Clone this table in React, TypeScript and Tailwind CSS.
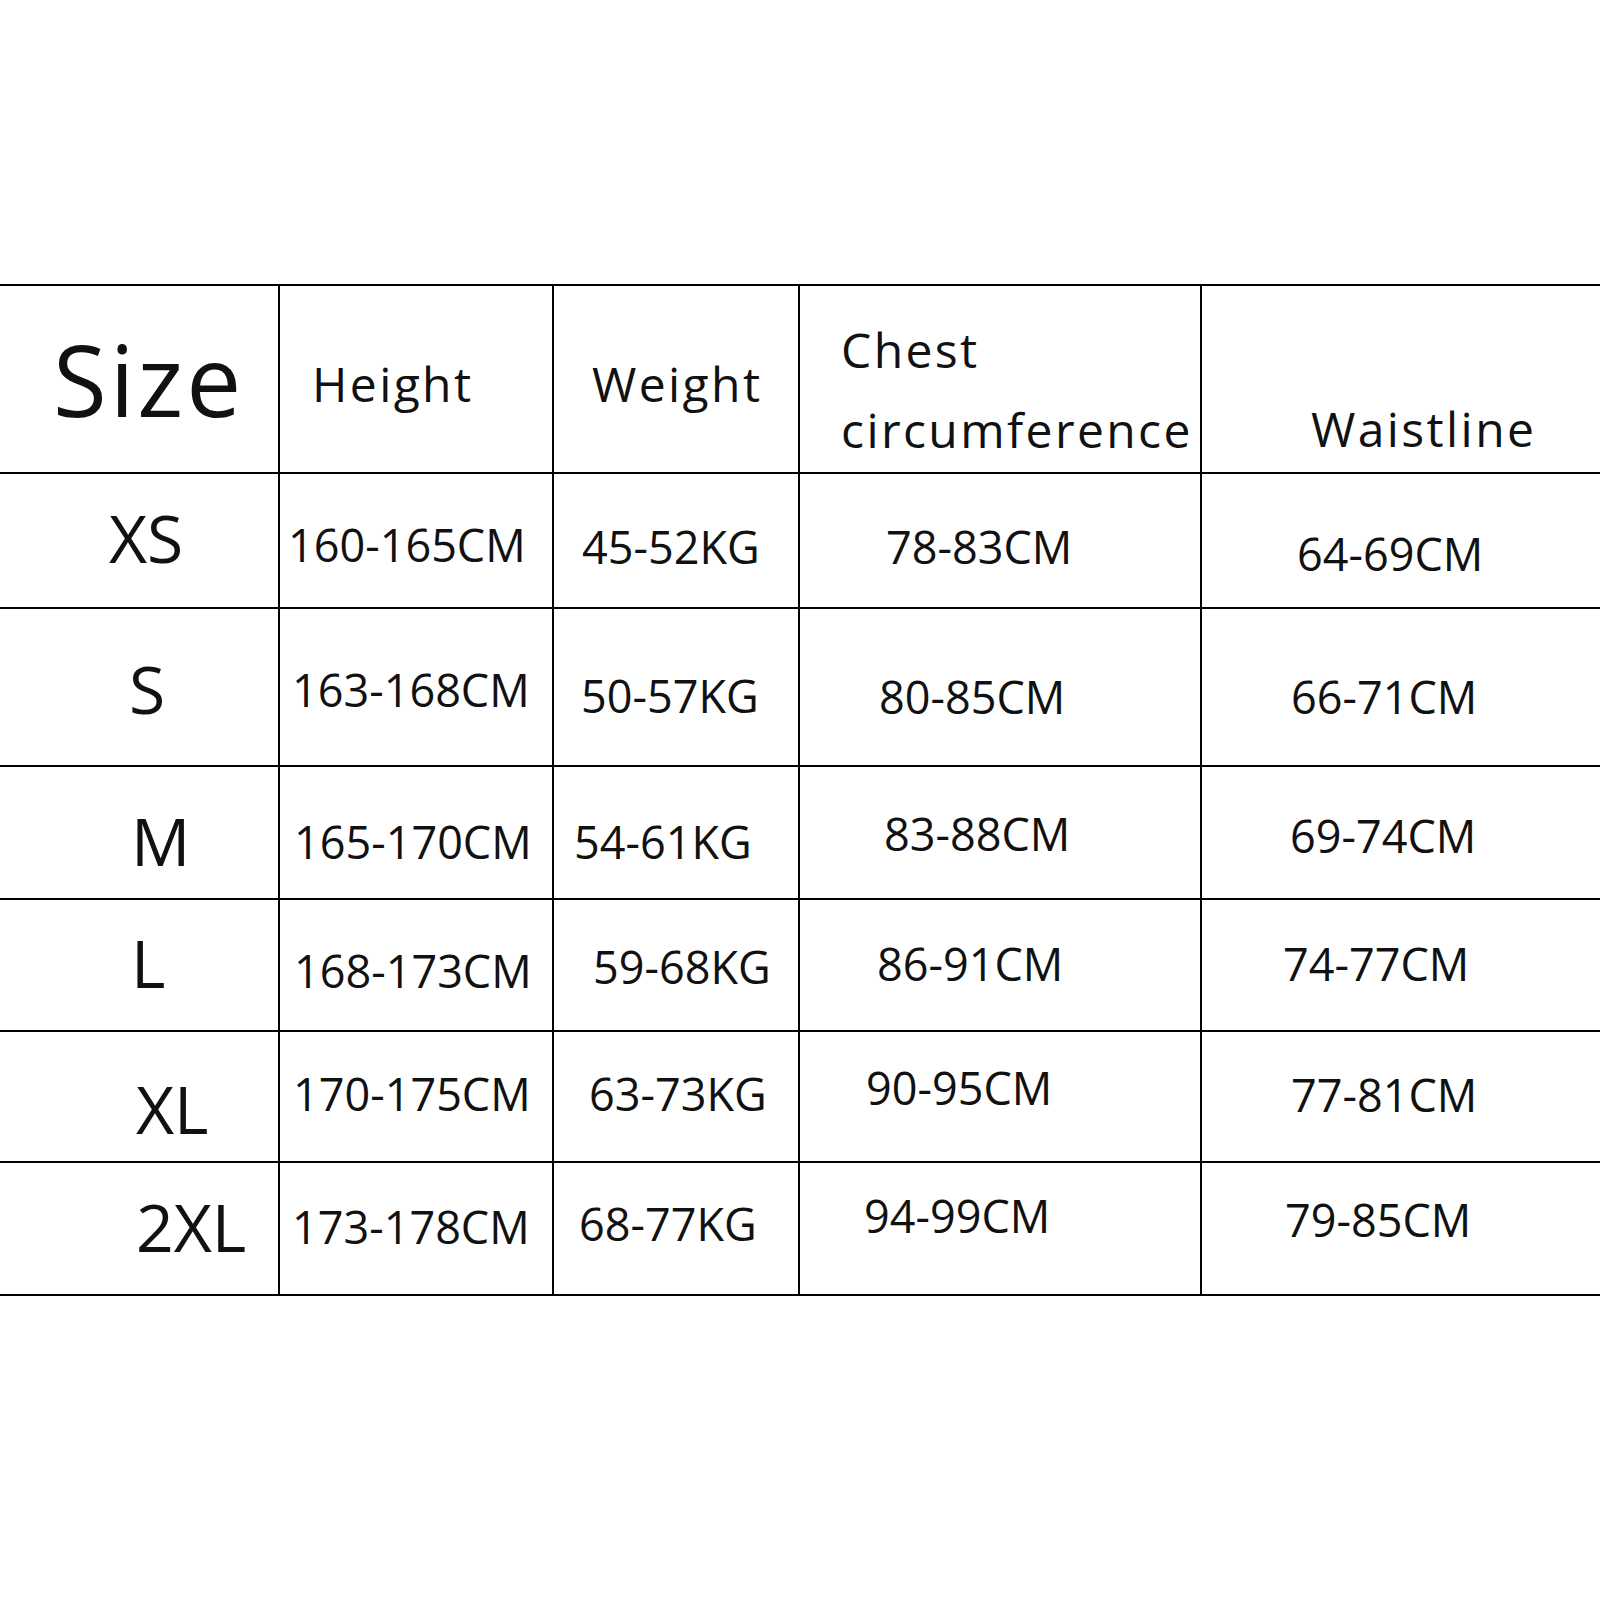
import React from "react";

type Cell = { t: string; c: string };
type Row = { h: string; cells: Cell[] };

const rows: Row[] = [
  {
    h: "h-[135px]",
    cells: [
      { t: "XS", c: "pl-[109px] pt-[30px] text-[66px]" },
      { t: "160-165CM", c: "pl-[8px] pt-[48px]" },
      { t: "45-52KG", c: "pl-[28px] pt-[50px]" },
      { t: "78-83CM", c: "pl-[86px] pt-[50px]" },
      { t: "64-69CM", c: "pl-[95px] pt-[57px]" },
    ],
  },
  {
    h: "h-[158px]",
    cells: [
      { t: "S", c: "pl-[129px] pt-[46px] text-[66px]" },
      { t: "163-168CM", c: "pl-[12px] pt-[58px]" },
      { t: "50-57KG", c: "pl-[27px] pt-[64px]" },
      { t: "80-85CM", c: "pl-[79px] pt-[65px]" },
      { t: "66-71CM", c: "pl-[89px] pt-[65px]" },
    ],
  },
  {
    h: "h-[133px]",
    cells: [
      { t: "M", c: "pl-[131px] pt-[40px] text-[66px]" },
      { t: "165-170CM", c: "pl-[14px] pt-[52px]" },
      { t: "54-61KG", c: "pl-[20px] pt-[52px]" },
      { t: "83-88CM", c: "pl-[84px] pt-[44px]" },
      { t: "69-74CM", c: "pl-[88px] pt-[46px]" },
    ],
  },
  {
    h: "h-[132px]",
    cells: [
      { t: "L", c: "pl-[131px] pt-[29px] text-[66px]" },
      { t: "168-173CM", c: "pl-[14px] pt-[48px]" },
      { t: "59-68KG", c: "pl-[39px] pt-[44px]" },
      { t: "86-91CM", c: "pl-[77px] pt-[41px]" },
      { t: "74-77CM", c: "pl-[81px] pt-[41px]" },
    ],
  },
  {
    h: "h-[131px]",
    cells: [
      { t: "XL", c: "pl-[136px] pt-[43px] text-[66px]" },
      { t: "170-175CM", c: "pl-[13px] pt-[39px]" },
      { t: "63-73KG", c: "pl-[35px] pt-[39px]" },
      { t: "90-95CM", c: "pl-[66px] pt-[33px]" },
      { t: "77-81CM", c: "pl-[89px] pt-[40px]" },
    ],
  },
  {
    h: "h-[133px]",
    cells: [
      { t: "2XL", c: "pl-[136px] pt-[30px] text-[66px]" },
      { t: "173-178CM", c: "pl-[12px] pt-[41px]" },
      { t: "68-77KG", c: "pl-[25px] pt-[38px]" },
      { t: "94-99CM", c: "pl-[64px] pt-[30px]" },
      { t: "79-85CM", c: "pl-[83px] pt-[34px]" },
    ],
  },
];

const grid = "grid grid-cols-[278px_274px_246px_402px_400px] border-b-2 border-black";

export default function App() {
  return (
    <div
      className="w-[1600px] h-[1600px] bg-white pt-[284px] text-[#111] font-medium overflow-hidden"
      style={{ fontFamily: '"Open Sans", "Noto Sans", sans-serif' }}
    >
      <div className="border-t-2 border-black">
        <div className={`${grid} h-[188px]`}>
          <div className="pl-[53px] pt-[44px] text-[98px] leading-none tracking-[0.03em]">Size</div>
          <div className="border-l-2 border-black pl-[32px] pt-[74px] text-[48px] leading-none tracking-[0.05em]">Height</div>
          <div className="border-l-2 border-black pl-[38px] pt-[74px] text-[48px] leading-none tracking-[0.05em]">Weight</div>
          <div className="border-l-2 border-black pl-[41px] pt-[24px] text-[48px] leading-[80px] tracking-[0.05em]">
            <div>Chest</div>
            <div>circumference</div>
          </div>
          <div className="border-l-2 border-black pl-[109px] pt-[119px] text-[48px] leading-none tracking-[0.05em]">Waistline</div>
        </div>
        {rows.map((r, i) => (
          <div key={i} className={`${grid} ${r.h}`}>
            {r.cells.map((cell, j) => (
              <div
                key={j}
                className={`${j === 0 ? "" : "border-l-2 border-black"} ${j === 0 ? "" : "text-[45px] tracking-[0px]"} leading-none whitespace-nowrap ${cell.c}`}
              >
                {cell.t}
              </div>
            ))}
          </div>
        ))}
      </div>
    </div>
  );
}
